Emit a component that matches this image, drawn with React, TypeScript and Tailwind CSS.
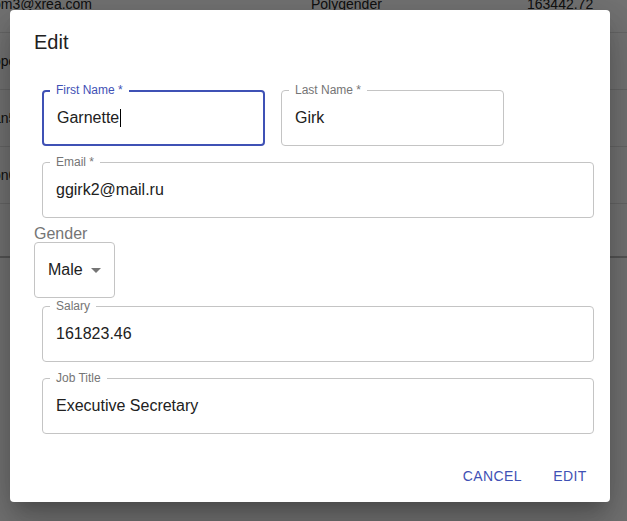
import React from "react";

const rows = [
  { email: "om3@xrea.com", gender: "Polygender", salary: "163442.72" },
  { email: "ope4@ucla.edu", gender: "Female", salary: "120394.11" },
  { email: "an5@ovh.net", gender: "Male", salary: "98223.50" },
  { email: "on6@ifeng.com", gender: "Male", salary: "141002.08" },
];

function Field({
  label,
  value,
  focused = false,
  width = "w-[552px]",
  cursor = false,
}: {
  label: string;
  value: string;
  focused?: boolean;
  width?: string;
  cursor?: boolean;
}) {
  return (
    <div
      className={`relative h-14 ${width} rounded ${
        focused ? "border-2 border-[#3f51b5] px-[13px]" : "border border-[#c4c4c4] px-[13px]"
      } flex items-center`}
    >
      <span
        className={`absolute ${
          focused ? "left-[6px] top-[-8px]" : "left-[7px] top-[-7px]"
        } bg-white pl-[6px] pr-[6px] text-[12px] leading-3 ${
          focused ? "text-[#3f51b5]" : "text-[#757575]"
        }`}
      >
        {label}
      </span>
      <span className="text-[16px] text-[#212121]">{value}</span>
      {cursor && <span className="ml-px h-[18px] w-px bg-black" />}
    </div>
  );
}

export default function App() {
  return (
    <div className="relative h-[521px] w-[627px] overflow-hidden bg-[#e7e7e7] font-['Liberation_Sans',Arial,sans-serif]">
      {/* table behind the dialog */}
      <div className="mt-[-24px]">
        {rows.map((r) => (
          <div
            key={r.email}
            className="flex h-[57px] items-center border-b border-[#cdcdcd] text-[14px] text-[#222]"
          >
            <div className="ml-[-7px] w-[318px] shrink-0">{r.email}</div>
            <div className="w-[216px] shrink-0">{r.gender}</div>
            <div>{r.salary}</div>
          </div>
        ))}
        <div className="h-[54px] border-b-2 border-[#aaaaaa]" />
      </div>

      {/* backdrop */}
      <div className="absolute inset-0 bg-black/50" />

      {/* dialog */}
      <div className="absolute left-[10px] top-[10px] w-[600px] rounded bg-white shadow-[0px_11px_15px_-7px_rgba(0,0,0,0.2),0px_24px_38px_3px_rgba(0,0,0,0.14),0px_9px_46px_8px_rgba(0,0,0,0.12)]">
        <div className="px-6 pt-4">
          <h2 className="text-[20px] leading-8 text-[#212121]">Edit</h2>
        </div>

        <div className="px-6 pb-4">
          <div className="ml-2 mt-8 flex gap-4">
            <Field label="First Name *" value="Garnette" focused cursor width="w-[223px]" />
            <Field label="Last Name *" value="Girk" width="w-[223px]" />
          </div>
          <div className="ml-2 mt-4">
            <Field label="Email *" value="ggirk2@mail.ru" />
          </div>

          <div className="mt-2 h-4 text-[16px] leading-4 text-[#757575]">Gender</div>
          <div className="relative flex h-14 w-[81px] items-center rounded border border-[#c4c4c4] pl-[13px]">
            <span className="text-[16px] text-[#212121]">Male</span>
            <svg
              className="absolute right-[6px] top-[15px] h-6 w-6 fill-[#757575]"
              viewBox="0 0 24 24"
            >
              <path d="M7 10l5 5 5-5z" />
            </svg>
          </div>

          <div className="ml-2 mt-2">
            <Field label="Salary" value="161823.46" />
          </div>
          <div className="ml-2 mt-4">
            <Field label="Job Title" value="Executive Secretary" />
          </div>
        </div>

        <div className="flex justify-end gap-2 p-2">
          <button className="h-9 min-w-16 rounded px-2 text-[14px] font-medium uppercase tracking-[0.4px] text-[#3f51b5]">
            Cancel
          </button>
          <button className="h-9 min-w-16 rounded px-2 text-[14px] font-medium uppercase tracking-[0.4px] text-[#3f51b5]">
            Edit
          </button>
        </div>
      </div>
    </div>
  );
}
